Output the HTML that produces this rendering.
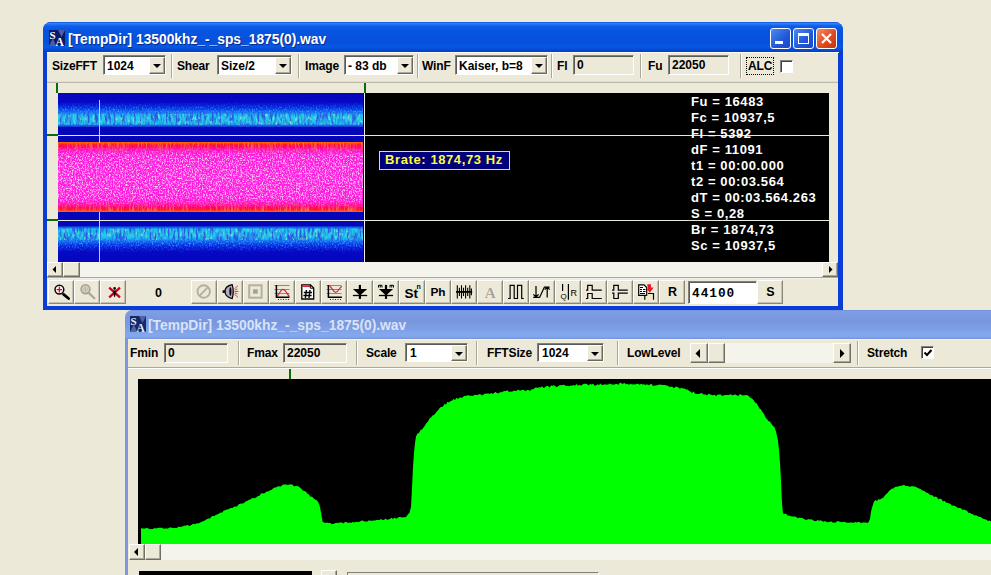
<!DOCTYPE html>
<html>
<head>
<meta charset="utf-8">
<title>[TempDir] 13500khz_-_sps_1875(0).wav</title>
<style>
html,body{margin:0;padding:0;}
body{width:991px;height:575px;overflow:hidden;background:#ECE9D8;position:relative;font-family:"Liberation Sans",sans-serif;}
.abs{position:absolute;}
div,span{box-sizing:border-box;}
.lbl{position:absolute;font-weight:bold;font-size:12px;line-height:14px;color:#000;white-space:nowrap;letter-spacing:-0.15px;}
.combo{position:absolute;height:20px;background:#fff;border:1px solid;border-color:#808080 #fff #fff #808080;box-shadow:inset 1px 1px 0 #5A5A5A;}
.combo .t{position:absolute;left:3px;top:3px;font-weight:bold;font-size:12px;line-height:15px;white-space:nowrap;}
.combo .b{position:absolute;right:0;top:1px;width:16px;height:17px;background:#ECE9D8;border:1px solid;border-color:#fff #6A685E #6A685E #fff;box-shadow:inset -1px -1px 0 #ACA899;}
.combo .b:after{content:"";position:absolute;left:3px;top:6px;border:4px solid transparent;border-top:4px solid #000;border-bottom:0;}
.combo.c19{height:19px;}.combo.c19 .b{height:16px;}.combo.c19 .t{top:2px;left:4px;}
.field{position:absolute;height:20px;background:#ECE9D8;border:1px solid;border-color:#808080 #fff #fff #808080;box-shadow:inset 1px 1px 0 #5A5A5A;}
.field .t{position:absolute;left:3px;top:2px;font-weight:bold;font-size:12px;line-height:15px;white-space:nowrap;}
.sep{position:absolute;width:2px;border-left:1px solid #ACA899;border-right:1px solid #fff;}
.tb{position:absolute;top:280px;width:26px;height:24px;background:#ECE9D8;border:1px solid;border-color:#fff #8A887A #8A887A #fff;box-shadow:inset -1px -1px 0 #C5C2B2;}
.tb svg{position:absolute;left:0;top:0;}
.tb .tx{position:absolute;left:0;right:0;top:3px;text-align:center;font-weight:bold;font-size:14px;line-height:16px;}
.sbtn{position:absolute;background:#ECE9D8;border:1px solid;border-color:#fff #716F64 #716F64 #fff;box-shadow:inset -1px -1px 0 #ACA899;}
.track{position:absolute;background:#F5F4EC;}
.info{position:absolute;left:691px;color:#fff;font-weight:bold;font-size:13px;line-height:16px;white-space:nowrap;letter-spacing:0.6px;}
</style>
</head>
<body>

<!-- ================= WINDOW 2 (inactive, behind) ================= -->
<div class="abs" id="w2" style="left:125px;top:310px;width:880px;height:280px;background:#ECE9D8;border-radius:7px 0 0 0;">
  <div class="abs" id="w2title" style="left:0;top:0;width:880px;height:29px;border-radius:7px 0 0 0;background:linear-gradient(#6F8ED8 0,#7E9EE6 1.5px,#7B9AE2 5px,#7896DE 12px,#7E9FE6 19px,#84A8EE 25px,#80A2E8 27.5px,#7090D4 29px);"></div>
  <div class="abs" style="left:0;top:29px;width:3px;height:260px;background:#7C97DD;"></div>
  <!-- icon -->
  <svg class="abs" style="left:5px;top:6px" width="16" height="16" viewBox="0 0 16 16"><rect width="16" height="16" fill="#14286C"/><path d="M9 0 L16 0 L12.500 7 Z M0 16 L4 8 L7 16Z" fill="#8FA0D8" opacity=".5"/><text x="0.500" y="8.500" font-family="Liberation Serif,serif" font-size="11" font-weight="bold" fill="#E4EAF8">S</text><text x="6.500" y="15.500" font-family="Liberation Serif,serif" font-size="11.500" font-weight="bold" fill="#E4EAF8">A</text></svg>
  <div class="abs" style="left:23px;top:8px;color:#D9E3F7;font-weight:bold;font-size:13.8px;line-height:16px;white-space:nowrap;">[TempDir] 13500khz_-_sps_1875(0).wav</div>
</div>

<!-- window 2 toolbar (page coords) -->
<div class="abs" style="left:128px;top:339px;width:870px;height:1px;background:#F6F5EC;"></div>
<div class="abs" style="left:128px;top:367px;width:870px;height:2px;border-top:1px solid #ACA899;border-bottom:1px solid #fff;"></div>
<div class="lbl" style="left:130px;top:346px;">Fmin</div>
<div class="field" style="left:164px;top:343px;width:64px;"><span class="t">0</span></div>
<div class="sep" style="left:238px;top:341px;height:24px;"></div>
<div class="lbl" style="left:247px;top:346px;">Fmax</div>
<div class="field" style="left:283px;top:343px;width:64px;"><span class="t">22050</span></div>
<div class="sep" style="left:356px;top:341px;height:24px;"></div>
<div class="lbl" style="left:366px;top:346px;">Scale</div>
<div class="combo c19" style="left:405px;top:343px;width:63px;"><span class="t">1</span><span class="b"></span></div>
<div class="sep" style="left:476px;top:341px;height:24px;"></div>
<div class="lbl" style="left:487px;top:346px;">FFTSize</div>
<div class="combo c19" style="left:537px;top:343px;width:67px;"><span class="t">1024</span><span class="b"></span></div>
<div class="sep" style="left:617px;top:341px;height:24px;"></div>
<div class="lbl" style="left:627px;top:346px;">LowLevel</div>
<!-- lowlevel scrollbar -->
<div class="track" style="left:690px;top:343px;width:161px;height:20px;"></div>
<div class="sbtn" style="left:690px;top:343px;width:18px;height:20px;"><svg class="abs" style="left:4px;top:5px" width="6" height="9"><path d="M5 0 L5 9 L0.5 4.5Z" fill="#000"/></svg></div>
<div class="sbtn" style="left:708px;top:343px;width:17px;height:20px;"></div>
<div class="sbtn" style="left:833px;top:343px;width:18px;height:20px;"><svg class="abs" style="left:6px;top:5px" width="6" height="9"><path d="M0 0 L0 9 L4.5 4.5Z" fill="#000"/></svg></div>
<div class="sep" style="left:857px;top:341px;height:24px;"></div>
<div class="lbl" style="left:867px;top:346px;">Stretch</div>
<div class="abs" style="left:921px;top:346px;width:13px;height:13px;background:#fff;border:1px solid;border-color:#808080 #fff #fff #808080;box-shadow:inset 1px 1px 0 #404040;"><svg class="abs" style="left:1px;top:1px" width="10" height="10"><path d="M1.5 4.5 L4 7 L8.5 2" stroke="#000" stroke-width="2" fill="none"/></svg></div>

<!-- marker -->
<div class="abs" style="left:289px;top:369px;width:2px;height:10px;background:#0B6B0B;"></div>

<!-- spectrum plot -->
<svg class="abs" id="plot2" style="left:138px;top:379px" width="853" height="165" viewBox="138 379 853 165">
<rect x="138" y="379" width="853" height="165" fill="#000"/>
<path id="spec" fill="#00FF00" d="M141 544 L141.0 528.5 L142.5 528.2 L144.0 528.7 L145.5 528.2 L147.0 528.0 L148.5 528.5 L150.0 529.3 L151.5 529.1 L153.0 529.0 L154.5 528.1 L156.0 528.6 L157.5 528.1 L159.0 527.8 L160.5 527.7 L162.0 527.8 L163.5 528.8 L165.0 528.6 L166.5 528.5 L168.0 528.4 L169.5 527.4 L171.0 527.5 L172.5 527.9 L174.0 528.0 L175.5 528.1 L177.0 528.0 L178.5 526.5 L180.0 527.0 L181.5 526.8 L183.0 526.3 L184.5 525.5 L186.0 525.7 L187.5 524.8 L189.0 525.9 L190.5 525.5 L192.0 524.6 L193.5 523.7 L195.0 524.3 L196.5 523.3 L198.0 523.4 L199.5 522.9 L201.0 522.0 L202.5 521.4 L204.0 521.0 L205.5 520.0 L207.0 518.9 L208.5 518.4 L210.0 518.6 L211.5 516.6 L213.0 515.9 L214.5 516.1 L216.0 514.7 L217.5 514.4 L219.0 513.5 L220.5 512.5 L222.0 512.8 L223.5 510.7 L225.0 510.3 L226.5 509.4 L228.0 509.5 L229.5 508.4 L231.0 508.0 L232.5 508.0 L234.0 506.8 L235.5 506.6 L237.0 506.6 L238.5 504.6 L240.0 503.8 L241.5 503.4 L243.0 503.6 L244.5 502.6 L246.0 501.3 L247.5 500.7 L249.0 499.8 L250.5 499.5 L252.0 498.1 L253.5 498.3 L255.0 497.9 L256.5 497.2 L258.0 496.1 L259.5 495.7 L261.0 493.5 L262.5 493.2 L264.0 493.6 L265.5 492.6 L267.0 491.3 L268.5 491.5 L270.0 490.3 L271.5 489.9 L273.0 488.4 L274.5 487.6 L276.0 487.5 L277.5 486.5 L279.0 486.3 L280.5 486.7 L282.0 485.3 L283.5 484.6 L285.0 484.4 L286.5 484.4 L288.0 485.2 L289.5 484.3 L291.0 484.6 L292.5 484.6 L294.0 486.4 L295.5 485.9 L297.0 485.9 L298.5 486.6 L300.0 487.6 L301.5 488.9 L303.0 490.7 L304.5 490.9 L306.0 491.8 L307.5 493.7 L309.0 494.4 L310.5 496.8 L312.0 496.5 L313.5 498.3 L315.0 499.6 L316.5 499.9 L318.0 501.7 L319.5 505.2 L320.5 509.5 L321.5 515.4 L322.5 521.6 L324.0 522.5 L325.5 522.9 L327.0 522.4 L328.5 523.0 L330.0 522.8 L331.5 523.9 L333.0 523.9 L334.5 523.4 L336.0 522.8 L337.5 523.0 L339.0 522.8 L340.5 522.6 L342.0 522.5 L343.5 523.4 L345.0 522.1 L346.5 521.9 L348.0 523.1 L349.5 522.4 L351.0 523.0 L352.5 521.9 L354.0 522.6 L355.5 522.0 L357.0 522.1 L358.5 521.9 L360.0 521.4 L361.5 520.6 L363.0 520.7 L364.5 521.6 L366.0 521.5 L367.5 521.4 L369.0 520.3 L370.5 520.7 L372.0 520.8 L373.5 520.4 L375.0 520.6 L376.5 520.0 L378.0 520.0 L379.5 519.9 L381.0 519.1 L382.5 520.1 L384.0 520.0 L385.5 518.4 L387.0 519.7 L388.5 519.5 L390.0 518.9 L391.5 517.7 L393.0 518.9 L394.5 517.5 L396.0 518.7 L397.5 518.0 L399.0 516.9 L400.5 516.9 L402.0 517.5 L403.5 517.2 L405.0 517.3 L406.5 516.5 L408.0 514.3 L409.5 512.8 L411.0 507.0 L412.0 488.2 L413.0 467.0 L414.0 452.6 L415.0 443.0 L416.0 436.5 L417.5 433.4 L419.0 433.0 L420.5 430.1 L422.0 429.4 L423.5 427.4 L425.0 425.5 L426.5 423.0 L428.0 421.5 L429.5 418.4 L431.0 417.5 L432.5 415.5 L434.0 414.9 L435.5 413.2 L437.0 411.2 L438.5 409.8 L440.0 407.5 L441.5 406.9 L443.0 406.5 L444.5 404.0 L446.0 404.4 L447.5 401.8 L449.0 402.6 L450.5 401.1 L452.0 400.7 L453.5 398.9 L455.0 400.0 L456.5 397.7 L458.0 399.0 L459.5 397.5 L461.0 397.8 L462.5 397.6 L464.0 396.0 L465.5 396.1 L467.0 395.4 L468.5 395.2 L470.0 395.7 L471.5 395.7 L473.0 395.9 L474.5 394.8 L476.0 395.0 L477.5 394.9 L479.0 394.2 L480.5 394.2 L482.0 395.5 L483.5 394.6 L485.0 393.6 L486.5 393.8 L488.0 393.2 L489.5 394.1 L491.0 393.1 L492.5 393.7 L494.0 393.2 L495.5 391.8 L497.0 393.2 L498.5 393.2 L500.0 392.3 L501.5 392.2 L503.0 391.5 L504.5 390.9 L506.0 391.0 L507.5 390.2 L509.0 392.1 L510.5 391.6 L512.0 391.8 L513.5 390.8 L515.0 390.7 L516.5 390.9 L518.0 389.4 L519.5 390.5 L521.0 390.4 L522.5 389.8 L524.0 390.0 L525.5 391.2 L527.0 389.9 L528.5 390.0 L530.0 391.0 L531.5 389.2 L533.0 389.6 L534.5 388.3 L536.0 387.3 L537.5 388.1 L539.0 387.2 L540.5 387.6 L542.0 386.3 L543.5 388.1 L545.0 387.2 L546.5 385.9 L548.0 386.0 L549.5 387.4 L551.0 385.6 L552.5 385.8 L554.0 385.3 L555.5 386.4 L557.0 386.9 L558.5 385.9 L560.0 384.9 L561.5 385.3 L563.0 384.7 L564.5 385.1 L566.0 385.9 L567.5 385.8 L569.0 386.2 L570.5 385.4 L572.0 385.7 L573.5 385.1 L575.0 385.8 L576.5 384.0 L578.0 385.8 L579.5 384.7 L581.0 385.7 L582.5 384.6 L584.0 383.7 L585.5 383.7 L587.0 383.9 L588.5 385.4 L590.0 384.0 L591.5 384.5 L593.0 383.8 L594.5 385.6 L596.0 385.4 L597.5 384.2 L599.0 385.1 L600.5 383.5 L602.0 385.2 L603.5 384.5 L605.0 384.4 L606.5 384.4 L608.0 384.8 L609.5 383.5 L611.0 384.2 L612.5 384.6 L614.0 384.7 L615.5 384.1 L617.0 383.9 L618.5 384.7 L620.0 382.6 L621.5 383.5 L623.0 383.7 L624.5 382.9 L626.0 384.3 L627.5 384.1 L629.0 384.8 L630.5 383.8 L632.0 384.6 L633.5 384.2 L635.0 384.5 L636.5 384.0 L638.0 383.7 L639.5 384.7 L641.0 383.8 L642.5 384.5 L644.0 384.2 L645.5 385.1 L647.0 384.2 L648.5 385.3 L650.0 384.6 L651.5 383.8 L653.0 385.9 L654.5 385.6 L656.0 385.4 L657.5 384.9 L659.0 384.8 L660.5 384.4 L662.0 385.1 L663.5 385.0 L665.0 385.1 L666.5 385.5 L668.0 385.8 L669.5 387.0 L671.0 386.8 L672.5 386.7 L674.0 388.3 L675.5 386.8 L677.0 386.8 L678.5 387.4 L680.0 388.7 L681.5 387.8 L683.0 388.5 L684.5 388.6 L686.0 389.4 L687.5 389.6 L689.0 390.7 L690.5 391.7 L692.0 392.9 L693.5 391.5 L695.0 393.5 L696.5 393.9 L698.0 394.1 L699.5 393.9 L701.0 393.1 L702.5 393.5 L704.0 394.7 L705.5 394.3 L707.0 395.5 L708.5 393.8 L710.0 394.2 L711.5 395.1 L713.0 395.2 L714.5 394.7 L716.0 396.1 L717.5 394.8 L719.0 394.6 L720.5 394.6 L722.0 395.8 L723.5 395.4 L725.0 394.9 L726.5 395.0 L728.0 394.9 L729.5 394.8 L731.0 394.2 L732.5 395.6 L734.0 394.7 L735.5 394.4 L737.0 395.6 L738.5 395.7 L740.0 393.9 L741.5 395.0 L743.0 395.6 L744.5 395.3 L746.0 394.9 L747.5 395.3 L749.0 396.2 L750.5 397.9 L752.0 398.4 L753.5 400.1 L755.0 402.4 L756.5 403.2 L758.0 405.7 L759.5 408.5 L761.0 409.6 L762.5 412.3 L764.0 414.1 L765.5 417.6 L767.0 418.9 L768.5 421.2 L770.0 421.5 L771.5 424.1 L773.0 426.0 L774.5 427.3 L776.0 431.4 L777.0 436.1 L778.0 440.7 L779.0 450.1 L780.0 462.7 L781.0 481.6 L782.0 503.6 L783.0 513.4 L784.5 514.1 L786.0 513.4 L787.5 515.4 L789.0 515.7 L790.5 516.0 L792.0 516.5 L793.5 516.5 L795.0 516.4 L796.5 517.3 L798.0 518.2 L799.5 517.4 L801.0 518.1 L802.5 518.1 L804.0 519.0 L805.5 519.7 L807.0 519.8 L808.5 519.1 L810.0 519.6 L811.5 519.2 L813.0 520.3 L814.5 521.0 L816.0 521.2 L817.5 520.1 L819.0 520.7 L820.5 520.3 L822.0 520.9 L823.5 521.8 L825.0 520.9 L826.5 521.9 L828.0 522.2 L829.5 522.1 L831.0 521.2 L832.5 522.4 L834.0 522.5 L835.5 522.7 L837.0 521.3 L838.5 521.3 L840.0 521.8 L841.5 522.2 L843.0 522.1 L844.5 521.7 L846.0 522.6 L847.5 522.7 L849.0 522.7 L850.5 522.5 L852.0 522.6 L853.5 522.9 L855.0 521.9 L856.5 522.6 L858.0 522.1 L859.5 522.1 L861.0 523.2 L862.5 522.5 L864.0 522.5 L865.5 522.4 L867.0 522.9 L868.5 522.2 L870.0 518.7 L871.0 511.8 L872.0 507.8 L873.0 504.6 L874.0 501.6 L875.5 500.1 L877.0 501.0 L878.5 499.2 L880.0 499.6 L881.5 498.6 L883.0 497.9 L884.5 495.9 L886.0 494.2 L887.5 493.1 L889.0 491.0 L890.5 489.7 L892.0 488.5 L893.5 488.4 L895.0 486.9 L896.5 486.7 L898.0 486.6 L899.5 486.1 L901.0 485.8 L902.5 485.4 L904.0 484.7 L905.5 486.1 L907.0 485.9 L908.5 486.2 L910.0 486.8 L911.5 486.2 L913.0 486.2 L914.5 486.4 L916.0 487.1 L917.5 487.8 L919.0 488.6 L920.5 489.1 L922.0 490.3 L923.5 490.8 L925.0 491.6 L926.5 492.8 L928.0 493.0 L929.5 494.6 L931.0 495.3 L932.5 495.3 L934.0 496.9 L935.5 496.6 L937.0 497.2 L938.5 499.4 L940.0 498.6 L941.5 499.3 L943.0 501.4 L944.5 500.8 L946.0 502.6 L947.5 503.1 L949.0 503.2 L950.5 503.9 L952.0 505.7 L953.5 505.5 L955.0 505.9 L956.5 506.9 L958.0 508.0 L959.5 507.9 L961.0 508.3 L962.5 510.0 L964.0 509.6 L965.5 510.2 L967.0 510.7 L968.5 513.0 L970.0 512.8 L971.5 513.9 L973.0 514.3 L974.5 515.6 L976.0 515.2 L977.5 515.9 L979.0 517.1 L980.5 516.7 L982.0 517.9 L983.5 519.1 L985.0 519.3 L986.5 519.7 L988.0 520.9 L989.5 520.6 L991.0 521.6 L992 544 Z"/>
</svg>

<!-- bottom scrollbar win2 -->
<div class="track" style="left:129px;top:544px;width:870px;height:16px;"></div>
<div class="sbtn" style="left:129px;top:544px;width:16px;height:16px;"><svg class="abs" style="left:3px;top:3px" width="6" height="9"><path d="M5 0 L5 8 L1 4Z" fill="#000"/></svg></div>
<div class="sbtn" style="left:145px;top:544px;width:16px;height:16px;"></div>

<!-- bottom partial controls -->
<div class="abs" style="left:139px;top:571px;width:173px;height:10px;background:#000;"></div>
<div class="sbtn" style="left:321px;top:570px;width:16px;height:10px;"></div>
<div class="abs" style="left:347px;top:572px;width:252px;height:10px;border:1px solid #808080;border-right-color:#fff;"></div>

<!-- ================= WINDOW 1 (active) ================= -->
<div class="abs" id="w1" style="left:43px;top:22px;width:800px;height:288px;border-radius:8px 8px 0 0;background:#0A3CD6;">
  <div class="abs" id="w1title" style="left:0;top:0;width:800px;height:30px;border-radius:8px 8px 0 0;background:linear-gradient(#0A50DC 0,#3080F4 1.5px,#0E5EEA 4px,#0855E2 8px,#0650DC 20px,#0858E4 25px,#0448D0 28px,#0340C4 30px);"></div>
  <div class="abs" id="w1client" style="left:4px;top:30px;width:791px;height:254px;background:#ECE9D8;"></div>
  <!-- icon -->
  <svg class="abs" style="left:6px;top:8px" width="16" height="16" viewBox="0 0 16 16"><rect width="16" height="16" fill="#0A1A6A"/><path d="M9 0 L16 0 L12.500 7 Z M0 16 L4 8 L7 16Z" fill="#8FA0D8" opacity=".5"/><text x="0.500" y="8.500" font-family="Liberation Serif,serif" font-size="11" font-weight="bold" fill="#fff">S</text><text x="6.500" y="15.500" font-family="Liberation Serif,serif" font-size="11.500" font-weight="bold" fill="#fff">A</text></svg>
  <div class="abs" style="left:25px;top:10px;color:#fff;font-weight:bold;font-size:13.8px;line-height:16px;white-space:nowrap;text-shadow:1px 1px 0 #0A2A8C;">[TempDir] 13500khz_-_sps_1875(0).wav</div>
  <!-- caption buttons -->
  <div class="abs" style="left:727px;top:6px;width:21px;height:21px;border-radius:3px;border:1px solid #fff;background:linear-gradient(135deg,#4C8BF0,#2156D8 60%,#1A48C0);"><div class="abs" style="left:4px;top:12px;width:8px;height:3px;background:#fff;"></div></div>
  <div class="abs" style="left:750px;top:6px;width:21px;height:21px;border-radius:3px;border:1px solid #fff;background:linear-gradient(135deg,#4C8BF0,#2156D8 60%,#1A48C0);"><div class="abs" style="left:4px;top:4px;width:11px;height:11px;border:1px solid #fff;border-top-width:3px;"></div></div>
  <div class="abs" style="left:773px;top:6px;width:21px;height:21px;border-radius:3px;border:1px solid #fff;background:linear-gradient(135deg,#F0906C,#E04A1E 55%,#C43410);"><svg class="abs" style="left:3px;top:3px" width="13" height="13"><path d="M2 2 L11 11 M11 2 L2 11" stroke="#fff" stroke-width="2.2"/></svg></div>
</div>

<!-- window 1 toolbar (page coords) -->
<div class="abs" style="left:47px;top:52px;width:792px;height:1px;background:#FBFAF4;"></div>
<div class="abs" style="left:47px;top:81px;width:791px;height:2px;border-top:1px solid #E0DDCD;border-bottom:1px solid #BDBAAB;"></div>
<div class="lbl" style="left:52px;top:59px;">SizeFFT</div>
<div class="combo" style="left:103px;top:55px;width:63px;"><span class="t">1024</span><span class="b"></span></div>
<div class="sep" style="left:171px;top:54px;height:24px;"></div>
<div class="lbl" style="left:177px;top:59px;">Shear</div>
<div class="combo" style="left:217px;top:55px;width:75px;"><span class="t">Size/2</span><span class="b"></span></div>
<div class="sep" style="left:298px;top:54px;height:24px;"></div>
<div class="lbl" style="left:305px;top:59px;">Image</div>
<div class="combo" style="left:344px;top:55px;width:70px;"><span class="t">- 83 db</span><span class="b"></span></div>
<div class="sep" style="left:417px;top:54px;height:24px;"></div>
<div class="lbl" style="left:422px;top:59px;">WinF</div>
<div class="combo" style="left:455px;top:55px;width:93px;"><span class="t">Kaiser, b=8</span><span class="b"></span></div>
<div class="sep" style="left:551px;top:54px;height:24px;"></div>
<div class="lbl" style="left:557px;top:59px;">Fl</div>
<div class="field" style="left:573px;top:55px;width:61px;"><span class="t">0</span></div>
<div class="sep" style="left:640px;top:54px;height:24px;"></div>
<div class="lbl" style="left:648px;top:59px;">Fu</div>
<div class="field" style="left:668px;top:55px;width:61px;"><span class="t">22050</span></div>
<div class="sep" style="left:740px;top:54px;height:24px;"></div>
<div class="lbl" style="left:748px;top:59px;outline:1px dotted #000;outline-offset:1px;">ALC</div>
<div class="abs" style="left:780px;top:60px;width:13px;height:13px;background:#fff;border:1px solid;border-color:#808080 #fff #fff #808080;box-shadow:inset 1px 1px 0 #404040;"></div>

<!-- spectrogram panel -->
<div class="abs" style="left:56px;top:83px;width:2px;height:10px;background:#0B6B0B;"></div>
<div class="abs" style="left:364px;top:83px;width:2px;height:10px;background:#0B6B0B;"></div>
<div class="abs" style="left:47px;top:134px;width:11px;height:2px;background:#0B6B0B;"></div>
<div class="abs" style="left:47px;top:219px;width:11px;height:2px;background:#0B6B0B;"></div>
<div class="abs" id="blk" style="left:58px;top:93px;width:771px;height:169px;background:#000;"></div>
<div class="abs" id="sgram" style="left:58px;top:93px;width:305px;height:169px;background:linear-gradient(
#0606BC 0,#0608C4 9px,#0718D4 12px,#0838E8 16px,#0C70F0 19px,#18B0F0 21.5px,#24CCE8 24px,#22C4EC 31px,#0A50E0 33px,#0606BC 34.5px,#0606B8 49px,
#FF6000 49.5px,#FF2018 51px,#FF0068 53.5px,#FF08B8 56.5px,#FF18DC 61px,#FF20E0 85px,#FF18DC 107px,#FF08B8 111px,#FF0068 114.5px,#FF2018 117px,#FF6000 118.5px,
#0606B8 119px,#0606BC 132.5px,#0A50E0 134px,#22C4EC 136px,#24CCE8 143px,#18B0F0 145.5px,#0C70F0 148px,#0838E8 151px,#0718D4 155px,#0608C4 158px,#0606BC 169px);"></div>
<svg class="abs" style="left:58px;top:93px" width="305" height="169">
<defs>
<filter id="nzW" x="0" y="0" width="100%" height="100%"><feTurbulence type="fractalNoise" baseFrequency="0.7 0.6" numOctaves="2" seed="3"/><feColorMatrix type="matrix" values="0 0 0 0 1  0 0 0 0 0.74  0 0 0 0 1  3 0 0 0 -1.3"/></filter>
<filter id="nzR" x="0" y="0" width="100%" height="100%"><feTurbulence type="fractalNoise" baseFrequency="0.6 0.08" numOctaves="2" seed="21"/><feColorMatrix type="matrix" values="0 0 0 0 1  0 0 0 0 0.25  0 0 0 0 0.1  3 0 0 0 -1.3"/></filter>
<filter id="nzB" x="0" y="0" width="100%" height="100%"><feTurbulence type="fractalNoise" baseFrequency="0.5 0.1" numOctaves="2" seed="11"/><feColorMatrix type="matrix" values="0 0 0 0 0.02  0 0 0 0 0.08  0 0 0 0 0.78  3.4 0 0 0 -1.4"/></filter>
<filter id="nzC" x="0" y="0" width="100%" height="100%"><feTurbulence type="fractalNoise" baseFrequency="0.7 0.5" numOctaves="2" seed="7"/><feColorMatrix type="matrix" values="0 0 0 0 0.05  0 0 0 0 0.42  0 0 0 0 1  3 0 0 0 -1.35"/></filter>
<filter id="nzG" x="0" y="0" width="100%" height="100%"><feTurbulence type="fractalNoise" baseFrequency="0.4 0.25" numOctaves="2" seed="5"/><feColorMatrix type="matrix" values="0 0 0 0 0.45  0 0 0 0 1  0 0 0 0 0.5  3 0 0 0 -1.7"/></filter>
<linearGradient id="fadeV" x1="0" y1="0" x2="0" y2="1"><stop offset="0.03" stop-color="#fff" stop-opacity="0"/><stop offset=".2" stop-color="#fff" stop-opacity="1"/><stop offset=".8" stop-color="#fff" stop-opacity="1"/><stop offset=".97" stop-color="#fff" stop-opacity="0"/><stop offset="1" stop-color="#fff" stop-opacity="0"/></linearGradient>
<linearGradient id="fadeE" x1="0" y1="0" x2="0" y2="1"><stop offset="0" stop-color="#fff" stop-opacity="1"/><stop offset=".17" stop-color="#fff" stop-opacity="0"/><stop offset=".83" stop-color="#fff" stop-opacity="0"/><stop offset="1" stop-color="#fff" stop-opacity="1"/></linearGradient>
<linearGradient id="fadeU" x1="0" y1="0" x2="0" y2="1"><stop offset="0" stop-color="#fff" stop-opacity="0"/><stop offset=".7" stop-color="#fff" stop-opacity="1"/><stop offset="1" stop-color="#fff" stop-opacity="1"/></linearGradient>
<linearGradient id="fadeD" x1="0" y1="0" x2="0" y2="1"><stop offset="0" stop-color="#fff" stop-opacity="1"/><stop offset=".3" stop-color="#fff" stop-opacity="1"/><stop offset="1" stop-color="#fff" stop-opacity="0"/></linearGradient>
<mask id="mk"><rect x="0" y="50" width="305" height="68" fill="url(#fadeV)"/></mask>
<mask id="mkE"><rect x="0" y="50" width="305" height="68" fill="url(#fadeE)"/></mask>
<mask id="mkU"><rect x="0" y="9" width="305" height="14" fill="url(#fadeU)"/></mask>
<mask id="mkD"><rect x="0" y="146" width="305" height="14" fill="url(#fadeD)"/></mask>
</defs>
<g mask="url(#mkU)"><rect x="0" y="9" width="305" height="14" filter="url(#nzC)" opacity=".85"/></g>
<rect x="0" y="19" width="305" height="15" filter="url(#nzB)" opacity=".9"/>
<rect x="0" y="21" width="305" height="11" filter="url(#nzG)" opacity=".85"/>
<g mask="url(#mk)"><rect x="0" y="50" width="305" height="68" filter="url(#nzW)" opacity=".95"/></g>
<g mask="url(#mkE)"><rect x="0" y="50" width="305" height="68" filter="url(#nzR)" opacity=".9"/></g>
<rect x="0" y="134" width="305" height="15" filter="url(#nzB)" opacity=".9"/>
<rect x="0" y="136" width="305" height="11" filter="url(#nzG)" opacity=".85"/>
<g mask="url(#mkD)"><rect x="0" y="146" width="305" height="14" filter="url(#nzC)" opacity=".85"/></g>
</svg>
<!-- cursor lines -->
<div class="abs" style="left:99px;top:100px;width:1px;height:43px;background:#9CE8B0;"></div>
<div class="abs" style="left:99px;top:212px;width:1px;height:50px;background:#9CE8B0;"></div>
<div class="abs" style="left:58px;top:135px;width:771px;height:1px;background:#E8E8D8;"></div>
<div class="abs" style="left:58px;top:220px;width:771px;height:1px;background:#E8E8D8;"></div>
<div class="abs" style="left:364px;top:93px;width:1px;height:169px;background:#F0F0F0;"></div>

<!-- Brate box -->
<div class="abs" style="left:379px;top:151px;width:131px;height:19px;background:#00007C;border:1px solid #D8D8D8;color:#FCFC40;font-weight:bold;font-size:13px;line-height:16px;padding-left:5px;white-space:nowrap;letter-spacing:0.6px;">Brate: 1874,73 Hz</div>

<!-- info text -->
<div class="info" style="top:94px;">Fu = 16483</div>
<div class="info" style="top:110px;">Fc = 10937,5</div>
<div class="info" style="top:126px;">Fl = 5392</div>
<div class="info" style="top:142px;">dF = 11091</div>
<div class="info" style="top:158px;">t1 = 00:00.000</div>
<div class="info" style="top:174px;">t2 = 00:03.564</div>
<div class="info" style="top:190px;">dT = 00:03.564.263</div>
<div class="info" style="top:206px;">S = 0,28</div>
<div class="info" style="top:222px;">Br = 1874,73</div>
<div class="info" style="top:238px;">Sc = 10937,5</div>

<!-- scrollbar win1 -->
<div class="track" style="left:47px;top:262px;width:791px;height:15px;"></div>
<div class="sbtn" style="left:47px;top:262px;width:16px;height:15px;"><svg class="abs" style="left:4px;top:3px" width="6" height="8"><path d="M4 0 L4 7 L0.5 3.5Z" fill="#000"/></svg></div>
<div class="sbtn" style="left:63px;top:262px;width:17px;height:15px;"></div>
<div class="sbtn" style="left:822px;top:262px;width:16px;height:15px;"><svg class="abs" style="left:6px;top:3px" width="6" height="8"><path d="M0 0 L0 7 L3.5 3.5Z" fill="#000"/></svg></div>
<div class="abs" style="left:47px;top:277px;width:791px;height:2px;border-top:1px solid #ACA899;border-bottom:1px solid #F3F1E5;"></div>

<!-- TOOLBAR-BUTTONS -->
<div class="tb" style="left:48px;"><svg width="24" height="22" viewBox="0 0 24 22"><circle cx="10.4" cy="8.6" r="4.4" fill="#fff" stroke="#100" stroke-width="1.5"/><path d="M7.6 8.6 H13.2 M10.4 5.8 V11.4" stroke="#E00028" stroke-width="1.4"/><path d="M14.6 13.4 L19.6 17.5" stroke="#000" stroke-width="2.8" stroke-linecap="round"/></svg></div>
<div class="tb" style="left:74px;"><svg width="24" height="22" viewBox="0 0 24 22"><circle cx="10.5" cy="8.2" r="4.4" fill="#CFCCBC" stroke="#A6A393" stroke-width="1.6"/><path d="M8 8.2 H13 M10.5 5.7 V10.700" stroke="#BDBAAA" stroke-width="1"/><path d="M14.2 12.400 L19.4 17.3" stroke="#AAA797" stroke-width="2.2" stroke-linecap="round"/></svg></div>
<div class="tb" style="left:100px;"><svg width="24" height="22" viewBox="0 0 24 22"><path d="M8.2 6.600 L19 16.400 M19 6.600 L8.2 16.400" stroke="#C4001C" stroke-width="2.200"/><circle cx="13.600" cy="7.400" r="1.300" fill="#000"/><path d="M12.500 9.500 L14.700 9.500 L14.300 15 L13.600 16.600 L12.900 15Z" fill="#000"/></svg></div>
<div class="tb" style="left:191px;"><svg width="24" height="22" viewBox="0 0 24 22"><circle cx="11.7" cy="10.5" r="6.2" fill="none" stroke="#B2AFA0" stroke-width="1.9"/><path d="M7.4 14.900 L16 6.100" stroke="#B2AFA0" stroke-width="1.9"/></svg></div>
<div class="tb" style="left:217px;"><svg width="24" height="22" viewBox="0 0 24 22"><path d="M14.200 3.600 C9.500 4.500 7 7.500 7 10.500 C7 13.500 9.500 16.500 14.200 17.600 C15.400 13.500 15.400 7.500 14.200 3.600Z" fill="#B0ACC6" stroke="#000" stroke-width="1.200"/><ellipse cx="12.400" cy="10.500" rx="1" ry="4.300" fill="#000"/><rect x="4.600" y="9.300" width="2.600" height="2.600" fill="#000"/><path d="M16.500 10.500 H20.500 M16.300 8 L20 4.600 M16.300 13 L20 16.400 M16.800 9.200 L19.500 8 M16.800 11.800 L19.500 13" stroke="#E03038" stroke-width="0.900"/></svg></div>
<div class="tb" style="left:243px;"><svg width="24" height="22" viewBox="0 0 24 22"><rect x="5.200" y="4.300" width="12.400" height="12.400" fill="none" stroke="#B2AFA0" stroke-width="2"/><rect x="9" y="8.300" width="4.800" height="4.400" fill="#A5A293"/></svg></div>
<div class="tb" style="left:269px;"><svg width="24" height="22" viewBox="0 0 24 22"><path d="M4.500 4.500 H19.500 M4.500 8.500 H19.500 M4.500 12.500 H19.500" stroke="#8C8A80" stroke-width="1"/><path d="M7 15.500 C9.500 13 10.500 8.400 13 8.400 C15.500 8.400 17 13 19.300 15.500" stroke="#D82838" stroke-width="1.2" fill="none"/><path d="M6.400 4 V16.300 H19.500" stroke="#000" stroke-width="1.500" fill="none"/><path d="M8 18.500 h1 m1.500 0 h1 m1.500 0 h1 m1.500 0 h1 m1.500 0 h1" stroke="#333" stroke-width="1"/></svg></div>
<div class="tb" style="left:295px;"><svg width="24" height="22" viewBox="0 0 24 22"><path d="M5.800 3.900 H14.500 L17.700 7 V18 H5.800Z" fill="#fff" stroke="#000" stroke-width="1.300"/><path d="M6.500 5.300 H14" stroke="#E02838" stroke-width="1.400"/><path d="M14.300 4 V7.200 H17.500" fill="none" stroke="#000" stroke-width="1"/><path d="M10.400 9 L9.400 17 M14 9 L13 17 M7.800 11.500 H16 M7.400 14.500 H15.600" stroke="#000" stroke-width="1.400"/></svg></div>
<div class="tb" style="left:321px;"><svg width="24" height="22" viewBox="0 0 24 22"><path d="M4.500 4.500 H19.500 M4.500 12.500 H19.500" stroke="#8C8A80" stroke-width="1"/><path d="M4.500 8.500 H19.500" stroke="#D86068" stroke-width="1"/><path d="M7.500 5 C10 6 11 11.300 13.700 11.300 C16.400 11.300 17.500 6 19.900 5.300" stroke="#D82838" stroke-width="1.200" fill="none"/><path d="M6.400 4 V16.300 H19.900" stroke="#000" stroke-width="1.500" fill="none"/><path d="M8 18.500 h1 m1.500 0 h1 m1.500 0 h1 m1.500 0 h1 m1.500 0 h1" stroke="#333" stroke-width="1"/></svg></div>
<div class="tb" style="left:347px;"><svg width="24" height="22" viewBox="0 0 24 22"><path d="M11.900 3.900 V17.900" stroke="#000" stroke-width="2.200"/><path d="M4.900 8 H19.200 L12 14.600Z" fill="#000"/><path d="M4.900 14.500 H19.200" stroke="#000" stroke-width="1.300"/></svg></div>
<div class="tb" style="left:373px;"><svg width="24" height="22" viewBox="0 0 24 22"><path d="M12 3.900 V17.900" stroke="#000" stroke-width="2.200"/><path d="M4.900 8 H19.100 L12 14.600Z" fill="#000"/><path d="M4.900 14.500 H19.100" stroke="#000" stroke-width="1.300"/><path d="M4.500 6.500 V4.300 H8 V6.500 M6.250 4.300 V6.500 M16 6.500 V4.300 H19.500 V6.500 M17.750 4.300 V6.500" stroke="#000" stroke-width="1" fill="none"/></svg></div>
<div class="tb" style="left:399px;"><svg width="24" height="22" viewBox="0 0 24 22"><text x="4.500" y="16.800" font-family="Liberation Sans,sans-serif" font-weight="bold" font-size="13.500" fill="#000">St</text><text x="16.400" y="8" font-family="Liberation Sans,sans-serif" font-weight="bold" font-size="7" fill="#000">n</text></svg></div>
<div class="tb" style="left:425px;"><svg width="24" height="22" viewBox="0 0 24 22"><text x="4.600" y="14.700" font-family="Liberation Sans,sans-serif" font-weight="bold" font-size="11.800" fill="#000" letter-spacing="-0.300">Ph</text></svg></div>
<div class="tb" style="left:451px;"><svg width="24" height="22" viewBox="0 0 24 22"><path d="M4.100 10.900 H20.200" stroke="#000" stroke-width="1.800"/><path d="M5.300 4.300 V17.500 M7.400 6.800 V15 M9.500 4.300 V17.500 M11.500 6.800 V15 M13.600 4.300 V17.500 M15.700 6.800 V15 M17.800 4.300 V17.500 M19.400 7.500 V14.300" stroke="#000" stroke-width="1.100"/></svg></div>
<div class="tb" style="left:477px;"><svg width="24" height="22" viewBox="0 0 24 22"><text x="7.600" y="17.400" font-family="Liberation Serif,serif" font-weight="bold" font-size="15.500" fill="#fff">A</text><text x="6.800" y="16.600" font-family="Liberation Serif,serif" font-weight="bold" font-size="15.500" fill="#AAA797">A</text></svg></div>
<div class="tb" style="left:503px;"><svg width="24" height="22" viewBox="0 0 24 22"><path d="M4 17.500 H6.100 V4.300 H10.200 V17.500 H13.500 V4.300 H17.700 V17.500 H19.800" stroke="#000" stroke-width="1.200" fill="none"/></svg></div>
<div class="tb" style="left:529px;"><svg width="24" height="22" viewBox="0 0 24 22"><path d="M6 4.900 V16 M3.400 13.400 L6 16 L8.600 13.400 M3.200 16.400 H9.600 L14.400 6 H19.600 M17.200 6 V16.400 M14.700 8.600 L17.200 6.100 L19.700 8.600" stroke="#000" stroke-width="1.250" fill="none"/></svg></div>
<div class="tb" style="left:555px;"><svg width="24" height="22" viewBox="0 0 24 22"><path d="M12.400 3 V18.800 M6.600 3 V10" stroke="#000" stroke-width="1.200"/><text x="4.600" y="17.700" font-family="Liberation Sans,sans-serif" font-size="8" fill="#000">Q</text><text x="14.600" y="14.600" font-family="Liberation Sans,sans-serif" font-size="9" fill="#000">R</text></svg></div>
<div class="tb" style="left:581px;"><svg width="24" height="22" viewBox="0 0 24 22"><path d="M4 9.200 H5.700 V4.300 H10.200 V9.200 H19.800 M4 17.500 H5.700 V12.500 H10.200 V17.500 H19.800" stroke="#000" stroke-width="1.200" fill="none"/></svg></div>
<div class="tb" style="left:607px;"><svg width="24" height="22" viewBox="0 0 24 22"><path d="M4.100 9.200 H5.800 V4.300 H10.300 V9.200 H19.800 M4.100 12.100 H5.800 V17.500 H10.300 V12.100 H19.800" stroke="#000" stroke-width="1.200" fill="none"/></svg></div>
<div class="tb" style="left:633px;"><svg width="24" height="22" viewBox="0 0 24 22"><path d="M4.700 3.900 H10 L12.700 6.600 V14.300 H4.700Z" fill="#fff" stroke="#000" stroke-width="1.200"/><path d="M6 6.500 H9 M6 8.500 H8 M9 8.500 H11.500 M6 10.500 H8 M9 10.500 H11.500 M6 12.500 H11" stroke="#000" stroke-width="1"/><path d="M13.200 3.200 L17 3.200 L17 6.500 L19.600 6.500 L15.800 11.700 L12.600 7.800 L14 7.800Z" fill="#E81820"/><path d="M14 12.500 H19.500 V18.800 M10.800 14.600 V18.800" stroke="#000" stroke-width="1.200" fill="none"/><rect x="12" y="14.800" width="6.500" height="3" fill="#F0EEB0" opacity=".7"/></svg></div>
<div class="tb" style="left:659px;"><svg width="24" height="22" viewBox="0 0 24 22"><text x="7.900" y="15.400" font-family="Liberation Sans,sans-serif" font-weight="bold" font-size="12.500" fill="#000">R</text></svg></div>
<div class="tb" style="left:757px;"><svg width="24" height="22" viewBox="0 0 24 22"><text x="8.300" y="15.400" font-family="Liberation Sans,sans-serif" font-weight="bold" font-size="12.500" fill="#000">S</text></svg></div>
<div class="abs" style="left:127px;top:282px;width:63px;height:23px;text-align:center;font-weight:bold;font-size:12.500px;line-height:22px;">0</div>
<div class="abs" style="left:688px;top:281px;width:69px;height:23px;background:#fff;border:1px solid;border-color:#808080 #fff #fff #808080;box-shadow:inset 1px 1px 0 #5A5A5A;"><span class="abs" style="left:3px;top:3px;font-family:'Liberation Mono',monospace;font-weight:bold;font-size:12.800px;letter-spacing:0.950px;line-height:17px;">44100</span></div>
<!-- /TOOLBAR-BUTTONS -->

</body>
</html>
